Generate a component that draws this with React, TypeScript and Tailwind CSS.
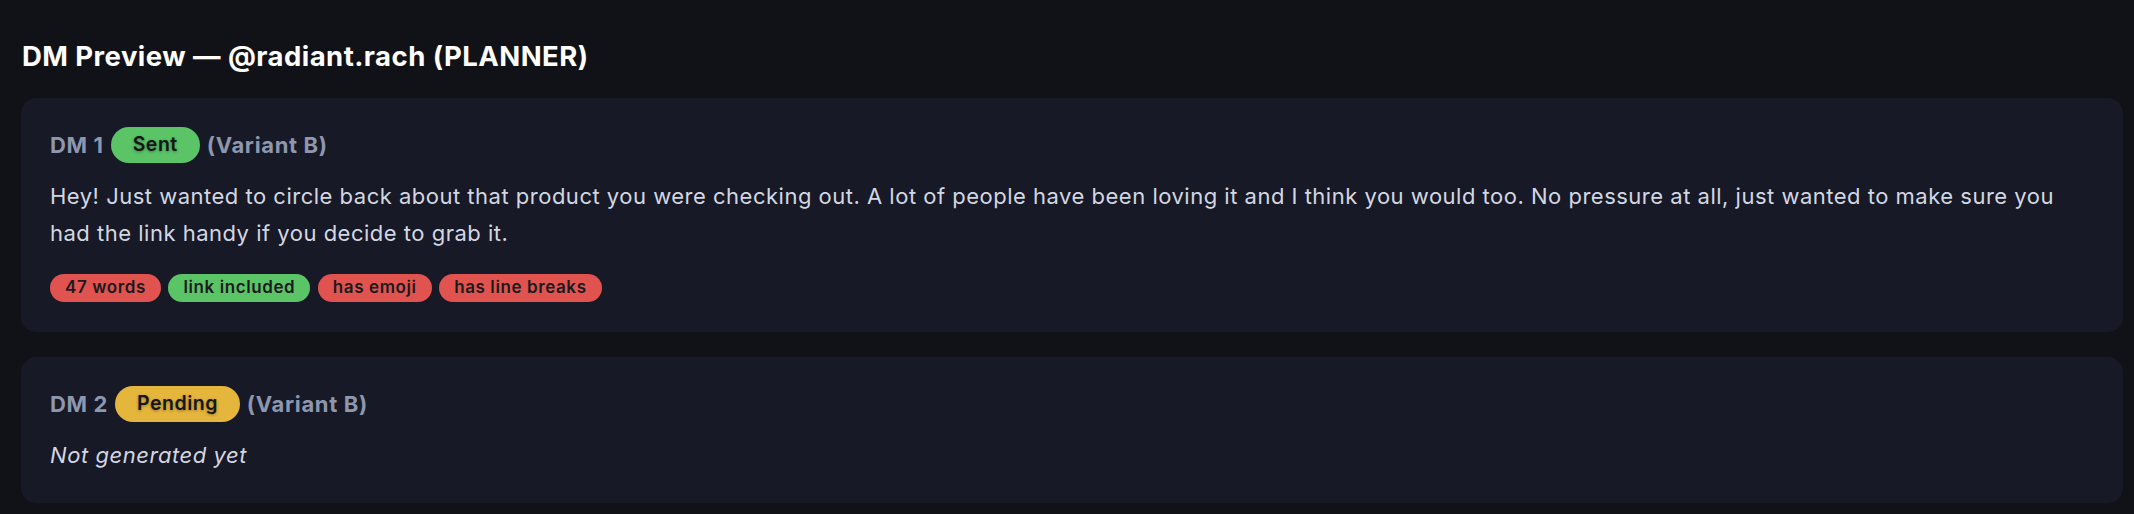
import React from "react";

const Badge = ({ label, color }: { label: string; color: string }) => (
  <span
    className={`inline-flex h-[36px] items-center rounded-full px-[22px] text-[19.5px] font-semibold tracking-[0.5px] text-[#15161a] [text-shadow:0_1px_3px_rgba(0,0,0,0.35)] ${color}`}
  >
    {label}
  </span>
);

const Chip = ({ label, color }: { label: string; color: string }) => (
  <span
    className={`inline-flex h-[28px] items-center rounded-full px-[15px] text-[17px] font-semibold tracking-[0.6px] text-[#1a1a1e] ${color}`}
  >
    {label}
  </span>
);

export default function App() {
  return (
    <div
      className="min-h-screen w-full bg-[#111217] pl-[21px] pr-[11px] pt-[37px] pb-[11px]"
      style={{ fontFamily: "Inter, 'Noto Sans', sans-serif" }}
    >
      <h2 className="mb-[23px] pl-[1px] text-[27.5px] font-bold leading-[38px] tracking-[0.45px] text-white">
        DM Preview — @radiant.rach (PLANNER)
      </h2>

      <div className="mb-[25px] rounded-[15px] bg-[#171926] pl-[29px] pr-[36px] pt-[29px] pb-[30px]">
        <div className="flex items-center gap-[7px] text-[22px] font-bold leading-none tracking-[0.65px] text-[#8d97ae]">
          <span>DM 1</span>
          <Badge label="Sent" color="bg-[#5bc466]" />
          <span>(Variant B)</span>
        </div>
        <p className="mt-[15px] text-[22px] leading-[1.7] tracking-[0.5px] text-[#d3d7e1]">
          Hey! Just wanted to circle back about that product you were checking out. A lot of people have been loving it
          and I think you would too. No pressure at all, just wanted to make sure you had the link handy if you decide
          to grab it.
        </p>
        <div className="mt-[21px] flex flex-wrap gap-[7.5px]">
          <Chip label="47 words" color="bg-[#e0534f]" />
          <Chip label="link included" color="bg-[#5bc466]" />
          <Chip label="has emoji" color="bg-[#e0534f]" />
          <Chip label="has line breaks" color="bg-[#e0534f]" />
        </div>
      </div>

      <div className="rounded-[15px] bg-[#171926] px-[29px] pt-[29px] pb-[29px]">
        <div className="flex items-center gap-[7px] text-[22px] font-bold leading-none tracking-[0.65px] text-[#8d97ae]">
          <span>DM 2</span>
          <Badge label="Pending" color="bg-[#e5b63c]" />
          <span>(Variant B)</span>
        </div>
        <p className="mt-[15px] text-[22px] italic leading-[1.7] tracking-[0.55px] text-[#d3d7e1]">Not generated yet</p>
      </div>
    </div>
  );
}
